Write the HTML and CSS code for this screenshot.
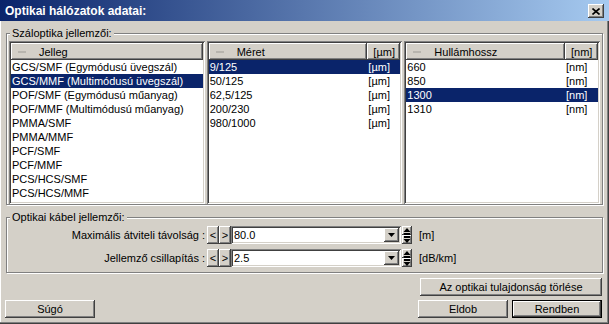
FILE: index.html
```html
<!DOCTYPE html>
<html lang="hu">
<head>
    <meta charset="UTF-8">
    <title>Optikai hálózatok adatai</title>
    <link rel="stylesheet" href="styles.css">
</head>
<body>
    <div class="window">
        <div class="titlebar">
            <span class="title">Optikai hálózatok adatai:</span>
            <button class="close">
                <svg width="8" height="7" viewBox="0 0 8 7"><path d="M0.5 0.5 L7.5 6.5 M7.5 0.5 L0.5 6.5" stroke="#000" stroke-width="1.6"/></svg>
            </button>
        </div>
        <div class="client">
            <fieldset class="group fibers">
                <legend>Száloptika jellemzői:</legend>
                <div class="lists">
                    <div class="listview">
                        <div class="lv-head">
                            <div class="col col-main"><span class="sort"></span>Jelleg</div>
                        </div>
                        <div class="lv-body">
                            <div class="row"><span class="cell-main">GCS/SMF (Egymódusú üvegszál)</span></div>
                            <div class="row sel"><span class="cell-main">GCS/MMF (Multimódusú üvegszál)</span></div>
                            <div class="row"><span class="cell-main">POF/SMF (Egymódusú műanyag)</span></div>
                            <div class="row"><span class="cell-main">POF/MMF (Multimódusú műanyag)</span></div>
                            <div class="row"><span class="cell-main">PMMA/SMF</span></div>
                            <div class="row"><span class="cell-main">PMMA/MMF</span></div>
                            <div class="row"><span class="cell-main">PCF/SMF</span></div>
                            <div class="row"><span class="cell-main">PCF/MMF</span></div>
                            <div class="row"><span class="cell-main">PCS/HCS/SMF</span></div>
                            <div class="row"><span class="cell-main">PCS/HCS/MMF</span></div>
                        </div>
                    </div>
                    <div class="listview">
                        <div class="lv-head">
                            <div class="col col-main"><span class="sort"></span>Méret</div>
                            <div class="col col-unit">[µm]</div>
                        </div>
                        <div class="lv-body">
                            <div class="row sel"><span class="cell-main">9/125</span><span class="cell-unit">[µm]</span></div>
                            <div class="row"><span class="cell-main">50/125</span><span class="cell-unit">[µm]</span></div>
                            <div class="row"><span class="cell-main">62,5/125</span><span class="cell-unit">[µm]</span></div>
                            <div class="row"><span class="cell-main">200/230</span><span class="cell-unit">[µm]</span></div>
                            <div class="row"><span class="cell-main">980/1000</span><span class="cell-unit">[µm]</span></div>
                        </div>
                    </div>
                    <div class="listview">
                        <div class="lv-head">
                            <div class="col col-main"><span class="sort"></span>Hullámhossz</div>
                            <div class="col col-unit">[nm]</div>
                        </div>
                        <div class="lv-body">
                            <div class="row"><span class="cell-main">660</span><span class="cell-unit">[nm]</span></div>
                            <div class="row"><span class="cell-main">850</span><span class="cell-unit">[nm]</span></div>
                            <div class="row sel"><span class="cell-main">1300</span><span class="cell-unit">[nm]</span></div>
                            <div class="row"><span class="cell-main">1310</span><span class="cell-unit">[nm]</span></div>
                        </div>
                    </div>
                </div>
            </fieldset>

            <fieldset class="group cable">
                <legend>Optikai kábel jellemzői:</legend>
                <div class="field-row">
                    <span class="field-label">Maximális átviteli távolság :</span>
                    <button class="nudge">&lt;</button>
                    <button class="nudge">&gt;</button>
                    <div class="combo">
                        <span class="combo-text">80.0</span>
                        <span class="drop">
                            <svg width="7" height="4" viewBox="0 0 7 4"><polygon points="0,0 7,0 3.5,4" fill="#000"/></svg>
                        </span>
                    </div>
                    <div class="spinner">
                        <span class="spin">
                            <svg width="8" height="8" viewBox="0 0 8 8"><polygon points="0.5,5 7.5,5 4,1" fill="#000"/><rect x="1" y="6" width="6" height="2" fill="#000"/></svg>
                        </span>
                        <span class="spin">
                            <svg width="8" height="8" viewBox="0 0 8 8"><rect x="1" y="0" width="6" height="2" fill="#000"/><polygon points="0.5,3 7.5,3 4,7" fill="#000"/></svg>
                        </span>
                    </div>
                    <span class="unit">[m]</span>
                </div>
                <div class="field-row">
                    <span class="field-label">Jellemző csillapítás :</span>
                    <button class="nudge">&lt;</button>
                    <button class="nudge">&gt;</button>
                    <div class="combo">
                        <span class="combo-text">2.5</span>
                        <span class="drop">
                            <svg width="7" height="4" viewBox="0 0 7 4"><polygon points="0,0 7,0 3.5,4" fill="#000"/></svg>
                        </span>
                    </div>
                    <div class="spinner">
                        <span class="spin">
                            <svg width="8" height="8" viewBox="0 0 8 8"><polygon points="0.5,5 7.5,5 4,1" fill="#000"/><rect x="1" y="6" width="6" height="2" fill="#000"/></svg>
                        </span>
                        <span class="spin">
                            <svg width="8" height="8" viewBox="0 0 8 8"><rect x="1" y="0" width="6" height="2" fill="#000"/><polygon points="0.5,3 7.5,3 4,7" fill="#000"/></svg>
                        </span>
                    </div>
                    <span class="unit">[dB/km]</span>
                </div>
            </fieldset>

            <div class="actions">
                <div class="action-row end">
                    <button class="btn wide">Az optikai tulajdonság törlése</button>
                </div>
                <div class="action-row">
                    <button class="btn">Súgó</button>
                    <span class="spacer"></span>
                    <button class="btn">Eldob</button>
                    <button class="btn default">Rendben</button>
                </div>
            </div>
        </div>
    </div>
</body>
</html>
```

FILE: styles.css
```css
* {
    box-sizing: border-box;
}
body {
    margin: 0;
    background-color: #d4d0c8;
    font-family: "Liberation Sans", Arial, sans-serif;
    font-size: 11px;
    color: #000;
}
button {
    font-family: inherit;
    font-size: 11px;
    color: #000;
    border: none;
    padding: 0;
    background-color: #d4d0c8;
}
.window {
    width: 609px;
    height: 324px;
    display: flex;
    flex-direction: column;
    background-color: #d4d0c8;
    box-shadow: inset -1px -1px #404040, inset -2px -2px #808080, inset 1px 1px #fff;
}
.titlebar {
    height: 21px;
    flex-shrink: 0;
    display: flex;
    align-items: center;
    justify-content: space-between;
    padding: 0 5px 0 5px;
    background: linear-gradient(to right, #0a246a, #a6caf0);
    color: #fff;
    font-weight: bold;
    font-size: 12px;
}
.close,
.nudge,
.drop,
.spin,
.col,
.btn {
    background-color: #d4d0c8;
    box-shadow: inset -1px -1px #404040, inset 1px 1px #fff, inset -2px -2px #808080;
}
.close {
    width: 16px;
    height: 14px;
    display: flex;
    align-items: center;
    justify-content: center;
    margin-top: 1px;
}
.client {
    flex: 1;
    display: flex;
    flex-direction: column;
    padding: 6px 6px 0 6px;
}
.group {
    margin: 0;
    min-width: 0;
    padding: 1px 2px 0 2px;
    border: 1px solid #808080;
    box-shadow: inset 1px 1px #fff, 1px 1px #fff;
}
.group legend {
    padding: 0 2px 0 2px;
    margin-left: 1px;
    line-height: 13px;
    background-color: #d4d0c8;
}

/* list views */
.lists {
    display: flex;
    gap: 2px;
    height: 163px;
}
.listview {
    flex: 1;
    display: flex;
    flex-direction: column;
    padding: 2px;
    background-color: #fff;
    box-shadow: inset 1px 1px #808080, inset -1px -1px #fff, inset 2px 2px #404040, inset -2px -2px #d4d0c8;
}
.lv-head {
    display: flex;
    height: 17px;
    flex-shrink: 0;
}
.col {
    display: flex;
    align-items: center;
    padding-left: 7px;
}
.col-main {
    flex: 1;
}
.col-unit {
    width: 33px;
    padding-left: 6px;
}
.sort {
    width: 8px;
    height: 2px;
    margin-right: 13px;
    background-color: #b8b5ae;
}
.row {
    display: flex;
    height: 14px;
    line-height: 14px;
    padding-left: 1px;
    white-space: nowrap;
}
.row.sel {
    background-color: #0a246a;
    color: #fff;
}
.cell-main {
    flex: 1;
}
.cell-unit {
    width: 33px;
    padding-left: 1px;
}

/* cable fields */
.cable {
    margin-top: 6px;
    padding: 2px 2px 5px 2px;
}
.field-row {
    display: flex;
    align-items: center;
    height: 18px;
}
.field-row + .field-row {
    margin-top: 5px;
}
.field-label {
    width: 198px;
    text-align: right;
    padding-right: 2px;
    white-space: nowrap;
}
.nudge {
    width: 12px;
    height: 18px;
    line-height: 16px;
}
.combo {
    width: 170px;
    height: 18px;
    display: flex;
    align-items: center;
    justify-content: space-between;
    padding: 2px 2px 2px 2px;
    background-color: #fff;
    box-shadow: inset 1px 1px #808080, inset -1px -1px #fff, inset 2px 2px #404040, inset -2px -2px #d4d0c8;
}
.combo-text {
    padding-left: 1px;
}
.drop {
    width: 15px;
    height: 14px;
    display: flex;
    align-items: center;
    justify-content: center;
}
.spinner {
    display: flex;
    flex-direction: column;
    width: 10px;
    height: 18px;
    margin-left: 1px;
}
.spin {
    height: 9px;
    display: flex;
    align-items: center;
    justify-content: center;
}
.unit {
    margin-left: 7px;
}

/* buttons */
.actions {
    display: flex;
    flex-direction: column;
    gap: 4px;
    margin: 5px 1px 0 -1px;
}
.action-row {
    display: flex;
    gap: 4px;
}
.action-row.end {
    justify-content: flex-end;
}
.spacer {
    flex: 1;
}
.btn {
    width: 90px;
    height: 18px;
}
.btn.wide {
    width: 182px;
}
.btn.default {
    outline: 1px solid #000;
    outline-offset: -1px;
    box-shadow: inset -2px -2px #404040, inset 2px 2px #fff, inset -3px -3px #808080;
}
```
